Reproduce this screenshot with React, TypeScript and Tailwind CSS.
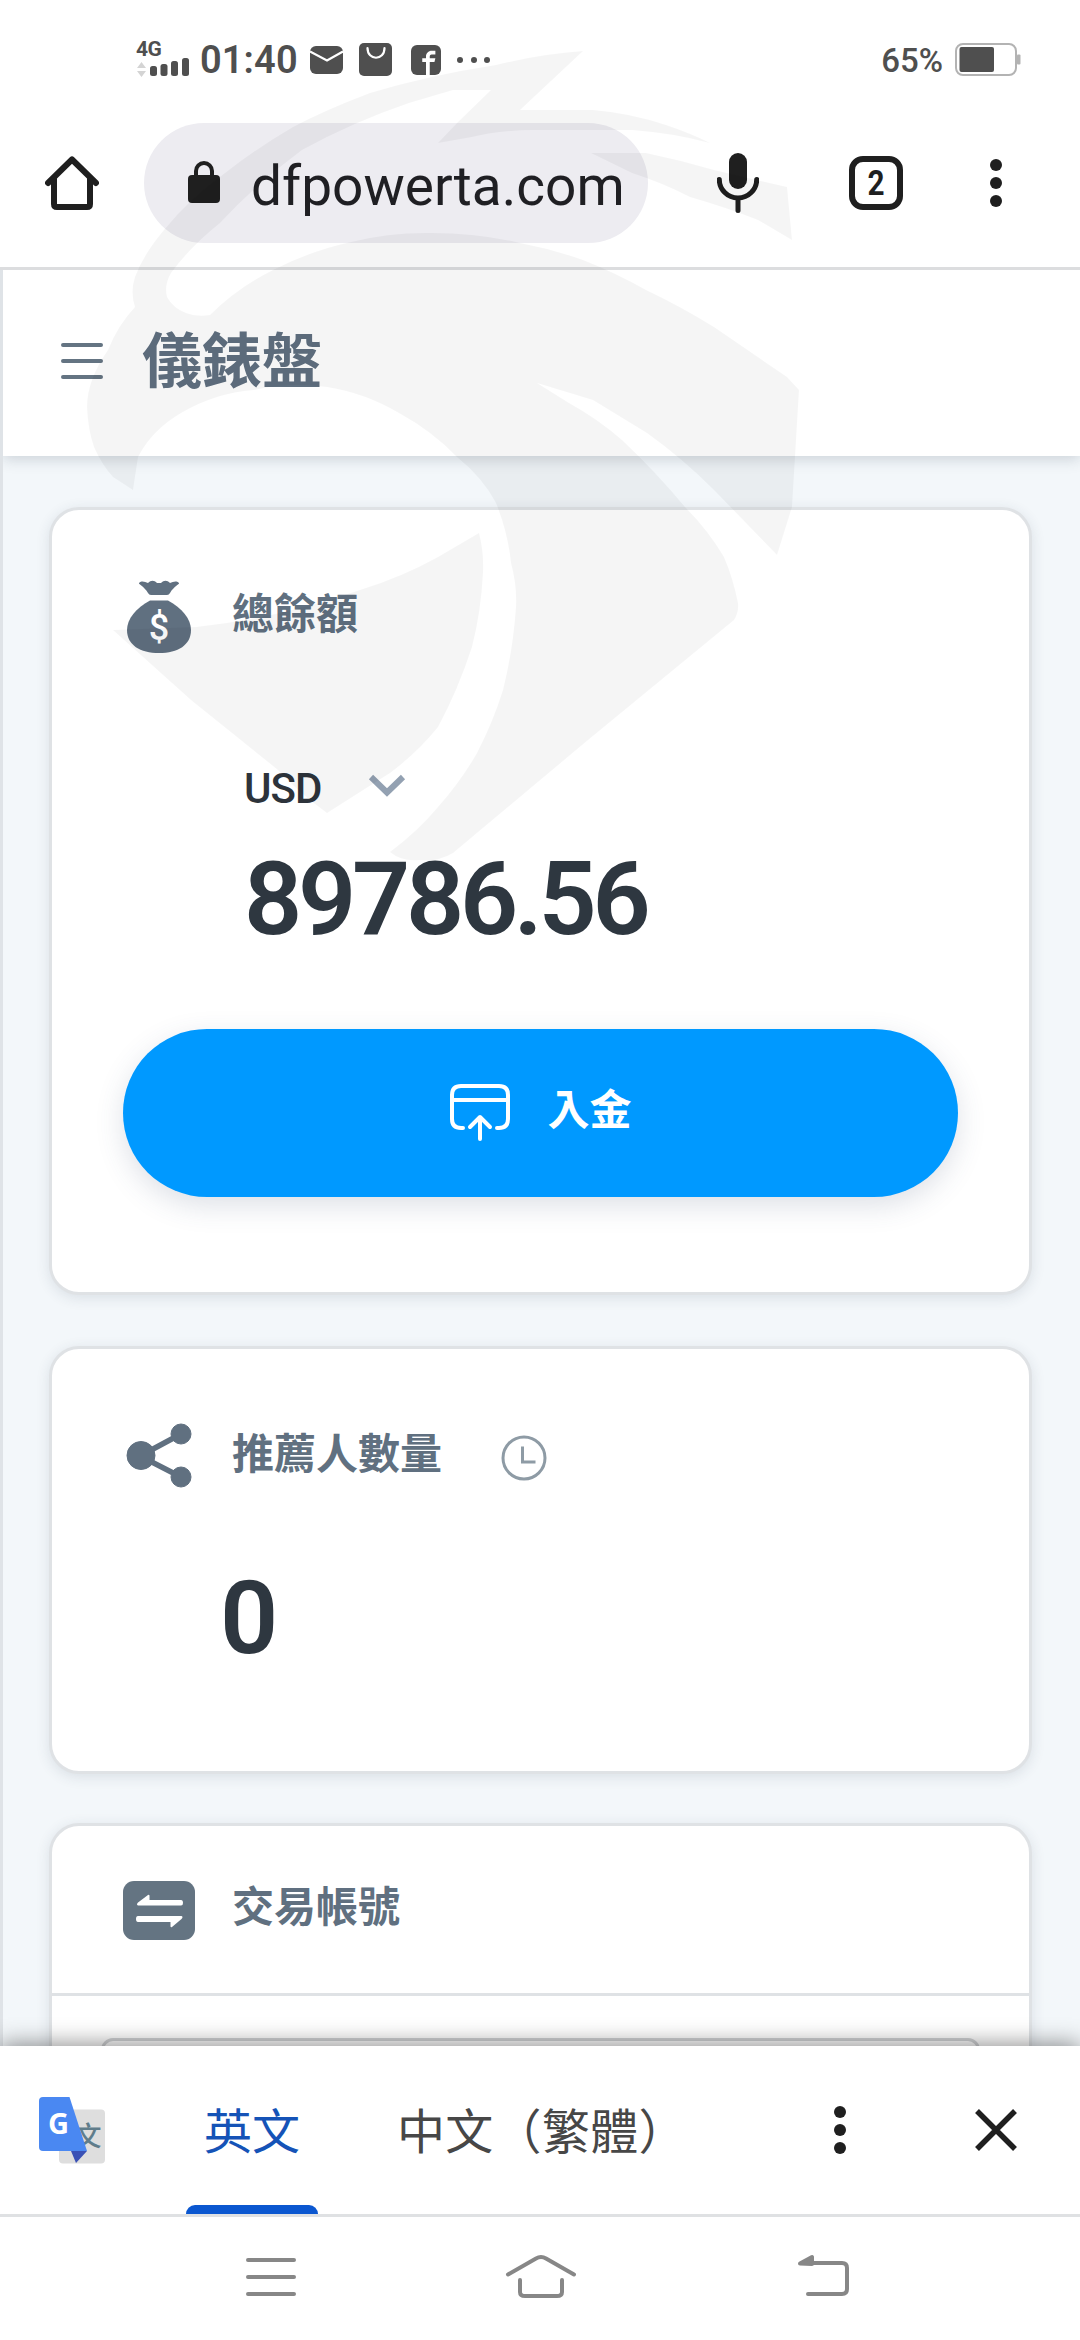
import React from 'react'
import { ImFacebook2 } from 'react-icons/im'

const CJK = "font-['Roboto','Noto_Sans_CJK_TC',sans-serif]"

function StatusBar() {
    return (
        <div className="h-[108px] shrink-0 flex items-start justify-between pl-[136px] pr-[58px] text-[#4f4f4f]">
            <div className="flex items-start">
                <div className="w-[64px] pt-[39px]">
                    <div className="text-[21px] leading-[21px] h-[19px] font-bold tracking-[-0.5px]">4G</div>
                    <svg width="54" height="20" viewBox="0 0 54 20" className="block">
                        <path d="M1 10 5.500 4l4.500 6zM1 13l4.500 6 4.500-6z" fill="#d4d4d4" />
                        <g fill="#4f4f4f">
                            <rect x="14" y="8" width="7" height="10" rx="2.500" />
                            <rect x="24.500" y="6" width="7" height="12" rx="2.500" />
                            <rect x="35" y="3" width="7" height="15" rx="2.500" />
                            <rect x="46" y="0" width="7" height="18" rx="2.500" />
                        </g>
                    </svg>
                </div>
                <span className="w-[110px] pt-[38px] text-[38px] leading-[44px] font-semibold tracking-[0.1px] whitespace-nowrap">01:40</span>
                <svg width="34" height="28" viewBox="0 0 34 28" className="mt-[45.500px] mr-[15px]">
                    <rect x="0" y="0" width="33" height="28" rx="6" fill="currentColor" />
                    <path d="M0 5.500 17 14.500 33 5.500" fill="none" stroke="#fff" strokeWidth="2.200" />
                </svg>
                <svg width="33" height="33" viewBox="0 0 33 33" className="mt-[43px] mr-[19px]">
                    <rect width="33" height="33" rx="5" fill="currentColor" />
                    <path d="M8.500 5c0 13 17 13 17 0" fill="none" stroke="#fff" strokeWidth="2.200" strokeLinecap="round" />
                </svg>
                <ImFacebook2 className="mt-[45px] w-[30px] h-[30px] rounded-[6px]" />
                <div className="flex gap-[7.500px] mt-[57px] ml-4">
                    <i className="w-[6px] h-[6px] rounded-full bg-[#4f4f4f]" />
                    <i className="w-[6px] h-[6px] rounded-full bg-[#4f4f4f]" />
                    <i className="w-[6px] h-[6px] rounded-full bg-[#4f4f4f]" />
                </div>
            </div>
            <div className="flex">
                <span className="pt-[42px] mr-3 text-[33px] leading-[38px] font-medium">65%</span>
                <svg width="67" height="33" viewBox="0 0 67 33" className="mt-[43px]">
                    <rect x="1" y="1" width="60" height="31" rx="7" fill="#fff" stroke="#b3b3b3" strokeWidth="2" />
                    <rect x="4.500" y="4" width="34.500" height="25" rx="2" fill="#4f4f4f" />
                    <rect x="62" y="11.500" width="3.500" height="10" rx="1" fill="#b3b3b3" />
                </svg>
            </div>
        </div>
    )
}

function Dots() {
    return (
        <svg width="12" height="48" viewBox="0 0 12 48" fill="#1f1f1f">
            <circle cx="6" cy="6" r="6" />
            <circle cx="6" cy="24" r="6" />
            <circle cx="6" cy="42" r="6" />
        </svg>
    )
}

function BrowserBar() {
    return (
        <div className="h-[162px] shrink-0 flex items-start pt-[15px] pl-[45px] border-b-[3px] border-[#dcdddf]">
            <svg width="54" height="54" viewBox="0 0 54 54" className="mt-[33px]" fill="none" stroke="#1f1f1f" strokeWidth="6" strokeLinejoin="round" strokeLinecap="round">
                <path d="M3 27 27 3.500 51 27" />
                <path d="M9 23v25q0 3 3 3h30q3 0 3-3V23" />
            </svg>
            <div className="ml-[45px] w-[504px] h-[120px] rounded-full bg-[#edecf1] flex items-center pl-11">
                <svg width="32" height="42" viewBox="0 0 32 42" className="mt-[-2px]">
                    <rect y="14" width="32" height="28" rx="4" fill="#1f1f1f" />
                    <path d="M8 16V10a8 8 0 0 1 16 0v6" fill="none" stroke="#1f1f1f" strokeWidth="4" />
                </svg>
                <span className="ml-[31px] mt-1.5 text-[55px] leading-[64px] text-[#1f1f23]">dfpowerta.com</span>
            </div>
            <svg width="42" height="60" viewBox="0 0 42 60" className="ml-[69px] mt-[30px]">
                <rect x="12" width="18" height="36" rx="9" fill="#1f1f1f" />
                <path d="M2.300 26.500a18.700 18.500 0 0 0 37.400 0M21 45v12.500" fill="none" stroke="#1f1f1f" strokeWidth="5" strokeLinecap="round" />
            </svg>
            <div className="ml-[90px] mt-[33px] w-[54px] h-[54px] rounded-[14px] border-[6px] border-[#1f1f1f] flex items-center justify-center text-[35px] leading-none font-bold text-[#1f1f1f]">
                <span className="scale-x-85">2</span>
            </div>
            <div className="ml-[87px] mt-9"><Dots /></div>
        </div>
    )
}

function PageHeader() {
    return (
        <header className="h-[186px] shrink-0 bg-white flex items-center pl-[58px] shadow-[0_3px_14px_rgba(40,60,80,0.2)] z-10">
            <svg width="42" height="36" viewBox="0 0 42 36" className="mt-[-4px]" stroke="#647482" strokeWidth="4" strokeLinecap="round">
                <path d="M2 2h38M2 18h38M2 34h38" />
            </svg>
            <h1 className="ml-[39px] mt-[-1px] text-[60px] leading-none font-bold text-[#607080]">儀錶盤</h1>
        </header>
    )
}

function MoneyBag() {
    return (
        <svg width="72" height="74" viewBox="0 0 72 74" fill="#607080" className="mt-[-3px]">
            <path d="M16 4c3-3 6-1 9 0 3-3 6-3 9 0h4c3-3 6-3 9 0 3-1 6-3 9 0 1 1-5 3-9 10q-1 2-3 2H28q-2 0-3-2C21 7 15 5 16 4z" />
            <path d="M27 21.500h18C59 29 68 40 68 51c0 15-13 23-32 23S4 66 4 51c0-11 9-22 23-29.500z" />
            <text x="36" y="61" textAnchor="middle" fill="#fff" fontSize="36" fontWeight="500" fontFamily="Roboto">$</text>
        </svg>
    )
}

function CardTitle({ icon, children }: { icon: React.ReactNode, children: React.ReactNode }) {
    return (
        <div className="flex items-center">
            {icon}
            <h2 className="ml-[37px] mt-[-6px] text-[42px] leading-[60px] font-bold text-[#607080]">{children}</h2>
        </div>
    )
}

const card = 'ml-[46px] mr-[48px] bg-white border-[3px] border-[#dfe2e5] rounded-[30px] shadow-[0_3px_14px_rgba(40,60,80,0.12)] shrink-0'

function BalanceCard() {
    return (
        <section className={`${card} h-[788px] mt-[51px] px-[71px] pt-[72px]`}>
            <CardTitle icon={<MoneyBag />}>總餘額</CardTitle>
            <div className="mt-[111px] ml-[121px] h-[50px] flex items-center">
                <span className="text-[42px] leading-[50px] font-medium tracking-[-1px] text-[#2d333b]">USD</span>
                <svg width="38" height="24" viewBox="0 0 38 24" className="ml-[47px] mt-[-7px]" fill="none" stroke="#93a1b2" strokeWidth="6">
                    <path d="M3 3 19 18.500 35 3" />
                </svg>
            </div>
            <div className="mt-[25px] ml-[121px] text-[102px] leading-[120px] font-semibold tracking-[-4.300px] text-[#2e3740]">89786.56</div>
            <button className="mt-[70px] w-full h-[168px] rounded-full bg-[#0099ff] text-white flex items-center justify-center gap-[36px] shadow-[0_9px_28px_rgba(60,80,110,0.17)]">
                <svg width="62" height="60" viewBox="0 0 62 60" className="mt-[-1px]" fill="none" stroke="currentColor" strokeWidth="4" strokeLinecap="round" strokeLinejoin="round">
                    <path d="M14 45h-2Q3 45 3 36V12Q3 3 12 3h38q9 0 9 9v24q0 9-9 9h-2M3 17h56" />
                    <path d="M31 56V35M21 44l10-10 10 10" />
                </svg>
                <span className="mt-[-4px] text-[42px] leading-[60px] font-bold">入金</span>
            </button>
        </section>
    )
}

function ReferralCard() {
    return (
        <section className={`${card} h-[428px] mt-[51px] px-[71px] pt-[71px]`}>
            <div className="flex items-center">
                <CardTitle icon={
                    <svg width="72" height="70" viewBox="3 0 72 70" fill="#607080" stroke="#607080">
                        <path d="M61 14 20 36l41 21" fill="none" strokeWidth="5.500" />
                        <circle cx="61" cy="14" r="10" />
                        <circle cx="61" cy="57" r="10" />
                        <circle cx="21" cy="35.500" r="14" />
                    </svg>
                }><span className="relative top-[3px]">推薦人數量</span></CardTitle>
                <svg width="46" height="46" viewBox="0 0 46 46" className="ml-[59px] mt-[5px]" fill="none" stroke="#8e9ba5" strokeWidth="3">
                    <circle cx="23" cy="23" r="21" />
                    <path d="M21.500 11.500v15.500h13" />
                </svg>
            </div>
            <div className="mt-[68px] ml-[97px] text-[102px] leading-[120px] font-semibold text-[#2e3740]">0</div>
        </section>
    )
}

function AccountCard() {
    return (
        <section className={`${card} h-[400px] mt-[49px]`}>
            <div className="h-[170px] border-b-[3px] border-[#dfe2e5] px-[71px] pt-[52px]">
                <CardTitle icon={
                    <svg width="72" height="60" viewBox="0 0 72 60" className="mt-[3px]">
                        <rect width="72" height="59" rx="11" fill="#647482" />
                        <path d="M15 24.500q-2-1 0-3L25 14q1.500-1 1.500 1v4H58q2 0 2 3 0 2.500-2 2.500zM58.500 35q2 .5 0 3L49 46q-1.500 1-1.500-1v-4H15q-2 0-2-3t2-3z" fill="#fff" />
                    </svg>
                }><span className="relative top-[1px]">交易帳號</span></CardTitle>
            </div>
            <div className="mt-[42px] ml-[49px] mr-[49px] h-[120px] rounded-[12px] border-[3px] border-[#d2d4d6]" />
        </section>
    )
}

function TranslateBar() {
    return (
        <div className="h-[171px] shrink-0 bg-white flex items-start pl-[39px] border-b-[3px] border-[#dfe1e3] shadow-[0_-2px_22px_rgba(0,0,0,0.45)] z-10">
            <svg width="66" height="67" viewBox="0 0 66 67" className="mt-[51px]">
                <rect x="20" y="12.500" width="46" height="54" rx="4" fill="#dedede" />
                <text x="49" y="49" textAnchor="middle" fontSize="27" fontWeight="500" fill="#607d8b" fontFamily="Noto Sans CJK TC">文</text>
                <path d="M32 54h16L37 66z" fill="#3a51b5" />
                <path d="M4 0h26.500L48 54H4q-4 0-4-4V4q0-4 4-4z" fill="#4a88f2" />
                <text x="19.500" y="37" textAnchor="middle" fontSize="29" fontWeight="700" fill="#fff" fontFamily="Open Sans">G</text>
            </svg>
            <div className="ml-[81px] w-[132px] h-[168px] flex flex-col items-center justify-between">
                <span className="mt-[51px] text-[48px] leading-[72px] text-[#1553b7]">英文</span>
                <i className="w-full h-[9px] rounded-t-[9px] bg-[#0b57d0]" />
            </div>
            <span className="ml-[79px] mt-[51px] w-[288px] text-[48px] leading-[72px] tracking-[0.3px] text-[#474747] whitespace-nowrap">中文（繁體）</span>
            <div className="ml-[149px] mt-[60px]"><Dots /></div>
            <svg width="42" height="42" viewBox="0 0 42 42" className="ml-[129px] mt-[63px]" stroke="#1f1f1f" strokeWidth="5.500">
                <path d="M2 2 40 40M40 2 2 40" />
            </svg>
        </div>
    )
}

function NavBar() {
    return (
        <div className="h-[123px] shrink-0 bg-white flex items-start pt-[34px] pl-[245px] z-10">
            <svg width="620" height="52" viewBox="0 0 620 52" fill="none" stroke="#878787" strokeWidth="4" strokeLinecap="round" strokeLinejoin="round">
                <path d="M3 9h46M3 26h46M3 43h46" />
                <path d="M263 23.500 291 7.500q5-3 10 0l28 16M275 29v12q0 4 5 4h32q5 0 5-4V29" />
                <path d="M568 12h29q5 0 5 5v21q0 5-5 5h-34" />
                <path d="M555 12.500 567 6v7z" fill="#878787" />
            </svg>
        </div>
    )
}

function Watermark() {
    return (
        <svg className="absolute left-0 top-0 z-20 pointer-events-none" width="1080" height="1000" viewBox="0 0 1080 1000" fill="#000" fillOpacity="0.04">
            <path d="M583 51Q540 54 496 65 430 75 370 93 325 110 293 127 257 148 225 173 188 200 164 230 143 255 135 277 130 292 135 307 118 325 108 350 87 380 87 407 88 430 94 447 102 465 113 477L133 490 138 457Q152 430 181 413 215 393 254 390 290 382 327 387 365 393 399 413 432 431 457 457 483 478 496 503 508 533 511 563 517 585 516 607 513 650 503 690 493 722 477 753 461 781 438 807 418 831 390 852 402 862 419 860 438 862 453 853L588 740 734 620Q739 612 738 603 733 578 724 557 708 530 685 507 656 472 622 440 598 419 569 403L537 383 593 400 647 433Q682 458 714 490L777 555 792 507 799 390 787 377 714 327Q680 306 646 290 616 273 583 260 552 249 520 243 478 233 433 233 390 232 351 242 310 251 273 270 237 288 210 315 196 317 186 313 173 308 167 297 164 285 171 273 190 247 220 223 257 183 302 150 353 122 409 103L453 90 491 90 457 123 438 143 472 137Q500 130 535 130L632 130Q673 133 710 143 690 133 666 125 630 113 593 110L520 110Z" />
            <path d="M591 153 646 153Q680 160 714 170L787 187 792 240 758 220Q725 207 690 197 663 183 632 173Z" />
            <path d="M113 630 196 627Q280 618 360 590 402 577 438 557L479 533Q484 552 483 573 481 612 472 647 458 690 438 727 418 752 390 773L327 813Q298 792 278 770L191 700Z" />
        </svg>
    )
}

function App() {
    return (
        <div className={`relative w-[1080px] h-[2340px] overflow-hidden bg-white flex flex-col ${CJK}`}>
            <StatusBar />
            <BrowserBar />
            <main className="h-[1776px] shrink-0 overflow-hidden bg-[#f3f7fa] border-l-[3px] border-[#dfe3e7] flex flex-col">
                <PageHeader />
                <BalanceCard />
                <ReferralCard />
                <AccountCard />
            </main>
            <TranslateBar />
            <NavBar />
            <Watermark />
        </div>
    )
}

export default App
